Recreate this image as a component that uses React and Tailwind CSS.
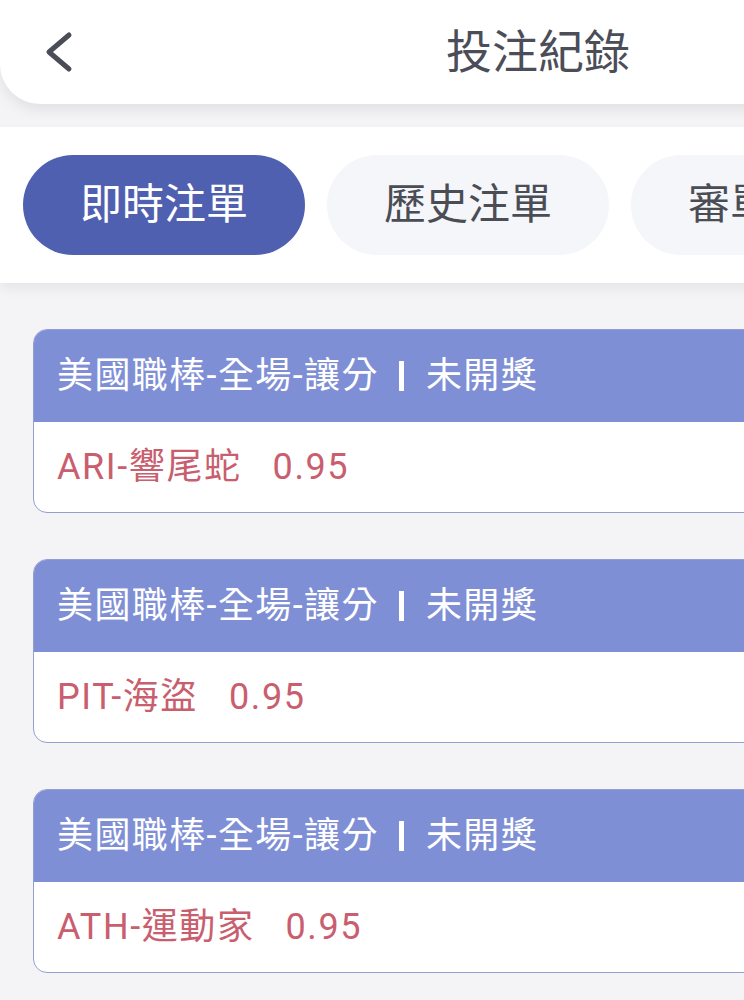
import React from "react";

const FONT = { fontFamily: 'Roboto, "Noto Sans CJK TC", "Noto Sans", sans-serif' };

const bets = [
  { team: "ARI-響尾蛇", odds: "0.95" },
  { team: "PIT-海盜", odds: "0.95" },
  { team: "ATH-運動家", odds: "0.95" },
];

function Card({ team, odds }) {
  return (
    <div className="w-full rounded-[14px] border-[1.5px] border-[#959fcf] overflow-hidden bg-white">
      <div className="h-[92px] bg-[#7f8fd6] flex items-center pl-[23px] text-white text-[36px] tracking-[1.4px] leading-none">
        <span>美國職棒-全場-讓分</span>
        <span className="ml-[20px] w-[5px] h-[30px] bg-white"></span>
        <span className="ml-[22px]">未開獎</span>
      </div>
      <div className="h-[90px] flex items-center pl-[23px] text-[#c95e6e] text-[36px] tracking-[1.6px] leading-none">
        <span>{team}</span>
        <span className="ml-[31px]">{odds}</span>
      </div>
    </div>
  );
}

export default function App() {
  return (
    <div className="w-[744px] h-[1000px] overflow-hidden bg-[#f4f4f6]" style={FONT}>
      <div className="w-[1076px]">
        <div className="h-[104px] bg-white rounded-b-[40px] shadow-[0_6px_14px_rgba(0,0,0,0.08)] grid grid-cols-[1fr_auto_1fr] items-center relative z-10">
          <div className="pl-[44px] flex items-center">
            <svg width="30" height="44" viewBox="0 0 30 44" fill="none">
              <polyline points="25,5 5,22 25,39" stroke="#4a4d58" strokeWidth="5" strokeLinecap="round" strokeLinejoin="round" />
            </svg>
          </div>
          <div className="text-[46px] text-[#4b4d58] leading-none">投注紀錄</div>
          <div></div>
        </div>

        <div className="mt-[23px] h-[156px] bg-white shadow-[0_6px_12px_rgba(0,0,0,0.06)] flex items-center gap-[22px] pl-[23px]">
          <div className="w-[282px] h-[100px] shrink-0 rounded-full bg-[#5060b0] flex items-center justify-center text-white text-[42px] leading-none">
            即時注單
          </div>
          <div className="w-[282px] h-[100px] shrink-0 rounded-full bg-[#f5f6fa] flex items-center justify-center text-[#4b4d55] text-[42px] leading-none">
            歷史注單
          </div>
          <div className="w-[282px] h-[100px] shrink-0 rounded-full bg-[#f5f6fa] flex items-center justify-center text-[#4b4d55] text-[42px] leading-none">
            審單紀錄
          </div>
        </div>

        <div className="px-[33px] pt-[46px] flex flex-col gap-[46px]">
          {bets.map((b, i) => (
            <Card key={i} team={b.team} odds={b.odds} />
          ))}
        </div>
      </div>
    </div>
  );
}
